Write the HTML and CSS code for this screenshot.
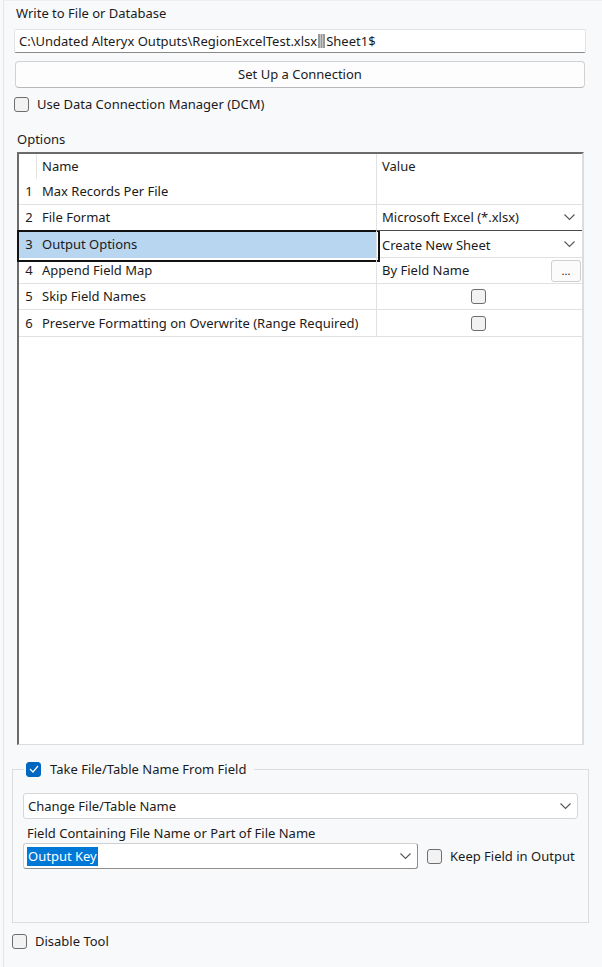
FILE: index.html
```html
<!DOCTYPE html>
<html lang="en">
<head>
    <meta charset="UTF-8">
    <title>Write to File or Database</title>
    <link rel="stylesheet" href="styles.css">
</head>
<body>
    <div class="panel">
        <div class="title">Write to File or Database</div>
        <div class="path">C:\Undated Alteryx Outputs\RegionExcelTest.xlsx<span class="sep"></span>Sheet1$</div>
        <div class="btn">Set Up a Connection</div>
        <label class="check dcm"><span class="box"></span>Use Data Connection Manager (DCM)</label>

        <div class="options-label">Options</div>
        <div class="grid">
            <div class="row head">
                <div class="num"></div>
                <div class="name">Name</div>
                <div class="value">Value</div>
            </div>
            <div class="row first">
                <div class="num">1</div>
                <div class="name">Max Records Per File</div>
                <div class="value"></div>
            </div>
            <div class="row">
                <div class="num">2</div>
                <div class="name">File Format</div>
                <div class="value combo">Microsoft Excel (*.xlsx)
                    <svg class="chev" width="11" height="7" viewBox="0 0 11 7"><polyline points="0.5,0.5 5.5,5.5 10.5,0.5" fill="none" stroke="#555" stroke-width="1.1"/></svg>
                </div>
            </div>
            <div class="row selected">
                <div class="num">3</div>
                <div class="name">Output Options</div>
                <div class="value combo">Create New Sheet
                    <svg class="chev" width="11" height="7" viewBox="0 0 11 7"><polyline points="0.5,0.5 5.5,5.5 10.5,0.5" fill="none" stroke="#555" stroke-width="1.1"/></svg>
                </div>
            </div>
            <div class="row">
                <div class="num">4</div>
                <div class="name">Append Field Map</div>
                <div class="value combo">By Field Name<span class="dots">...</span></div>
            </div>
            <div class="row">
                <div class="num">5</div>
                <div class="name">Skip Field Names</div>
                <div class="value center"><span class="box"></span></div>
            </div>
            <div class="row last">
                <div class="num">6</div>
                <div class="name">Preserve Formatting on Overwrite (Range Required)</div>
                <div class="value center"><span class="box"></span></div>
            </div>
        </div>

        <fieldset class="group">
            <legend><span class="box checked"><svg width="10" height="8" viewBox="0 0 10 8"><polyline points="1,4 4,7 9,1" fill="none" stroke="#fff" stroke-width="1.2"/></svg></span>Take File/Table Name From Field</legend>
            <div class="select wide">Change File/Table Name
                <svg class="chev" width="11" height="7" viewBox="0 0 11 7"><polyline points="0.5,0.5 5.5,5.5 10.5,0.5" fill="none" stroke="#555" stroke-width="1.1"/></svg>
            </div>
            <div class="field-label">Field Containing File Name or Part of File Name</div>
            <div class="field-row">
                <div class="select key"><span class="hl">Output Key</span>
                    <svg class="chev" width="11" height="7" viewBox="0 0 11 7"><polyline points="0.5,0.5 5.5,5.5 10.5,0.5" fill="none" stroke="#555" stroke-width="1.1"/></svg>
                </div>
                <label class="check"><span class="box"></span>Keep Field in Output</label>
            </div>
        </fieldset>

        <label class="check disable"><span class="box"></span>Disable Tool</label>
    </div>
</body>
</html>
```

FILE: styles.css
```css
* {
    margin: 0;
    padding: 0;
    box-sizing: border-box;
}
body {
    font-family: "Noto Sans", "Open Sans", sans-serif;
    font-size: 13px;
    color: #1b1b1b;
    background-color: #f8f9fb;
    width: 602px;
    height: 967px;
    overflow: hidden;
}
.panel {
    margin-left: 3px;
    height: 967px;
    border-left: 1px solid #e2e5e9;
    border-top: 1px solid #eceef1;
    padding-top: 3px;
}
.title {
    margin-left: 12px;
    height: 18px;
    line-height: 18px;
}
.path {
    margin: 7px 0 0 10px;
    width: 572px;
    height: 24px;
    line-height: 22px;
    padding-left: 4px;
    background-color: #fff;
    border: 1px solid #e3e3e3;
    border-bottom: 1px solid #8a8a8a;
    border-radius: 2px;
    white-space: nowrap;
}
.sep {
    display: inline-block;
    width: 7px;
    height: 14px;
    margin: 0 1px;
    vertical-align: -2px;
    background: linear-gradient(90deg, #9a9a9a 0 2px, #c4c4c4 2px 3px, #9a9a9a 3px 4px, #c4c4c4 4px 5px, #9a9a9a 5px 7px);
}
.btn {
    margin: 8px 0 0 11px;
    width: 570px;
    height: 27px;
    line-height: 25px;
    text-align: center;
    background-color: #fdfdfd;
    border: 1px solid #d2d2d2;
    border-bottom-color: #b8b8b8;
    border-radius: 4px;
}
.check {
    display: flex;
    align-items: center;
    gap: 8px;
}
.box {
    display: inline-flex;
    align-items: center;
    justify-content: center;
    width: 15px;
    height: 15px;
    border: 1px solid #6e6e6e;
    border-radius: 3px;
    background-color: #f2f2f2;
}
.box.checked {
    background-color: #0067c0;
    border-color: #0067c0;
}
.dcm {
    margin: 8px 0 0 10px;
    height: 16px;
}
.options-label {
    margin: 18px 0 0 13px;
    height: 18px;
    line-height: 18px;
}
.grid {
    margin: 4px 0 0 13px;
    width: 567px;
    height: 593px;
    background-color: #fff;
    border-top: 2px solid #6b6b6b;
    border-left: 2px solid #6b6b6b;
    border-right: 2px solid #dcdcdc;
    border-bottom: 1px solid #dcdcdc;
}
.row {
    display: grid;
    grid-template-columns: 18px 339px 1fr;
    height: 26px;
    line-height: 25px;
    border-bottom: 1px solid #e1e1e1;
}
.row.head {
    height: 25px;
    border-bottom: none;
}
.row.last {
    height: 27px;
    line-height: 26px;
}
.num {
    text-align: center;
    padding-left: 2px;
}
.head .num {
    border-right: 1px solid #e4e4e4;
}
.name {
    padding-left: 5px;
    white-space: nowrap;
}
.value {
    position: relative;
    padding-left: 5px;
    border-left: 1px solid #e1e1e1;
}
.combo {
    display: flex;
    align-items: center;
    justify-content: space-between;
    padding-right: 7px;
}
.center {
    display: flex;
    align-items: center;
    justify-content: center;
    padding-left: 0;
    padding-right: 3px;
}
.chev {
    flex: none;
}
.selected {
    position: relative;
    height: 27px;
    line-height: 26px;
}
.selected .num,
.selected .name {
    background-color: #b8d6f0;
}
.selected::before {
    content: "";
    position: absolute;
    left: -2px;
    top: -1px;
    width: 359px;
    height: 28px;
    border: 2px solid #111;
    pointer-events: none;
}
.selected .value {
    border-top: 1px solid #4a4a4a;
    margin-top: -1px;
    height: 28px;
}
.dots {
    width: 30px;
    height: 22px;
    line-height: 20px;
    margin-right: -6px;
    text-align: center;
    font-size: 11px;
    border: 1px solid #cfcfcf;
    border-radius: 3px;
    background-color: #fbfbfb;
}
.group {
    margin: 15px 0 0 8px;
    width: 576px;
    height: 163px;
    border: 1px solid #dcdde0;
    padding: 0 10px 0 10px;
}
.group legend {
    display: flex;
    align-items: center;
    gap: 9px;
    padding: 0 8px 0 2px;
    margin-left: 1px;
    height: 18px;
}
.select {
    display: flex;
    align-items: center;
    justify-content: space-between;
    height: 26px;
    padding: 0 6px 0 4px;
    background-color: #fff;
    border: 1px solid #d6d6d6;
    border-radius: 3px;
}
.select.wide {
    margin-top: 15px;
    width: 555px;
}
.field-label {
    margin: 4px 0 0 4px;
    height: 20px;
    line-height: 20px;
}
.field-row {
    display: flex;
    align-items: center;
    gap: 9px;
}
.select.key {
    width: 395px;
    border-color: #8e8e8e;
    border-top-color: #d0d0d0;
    border-left-color: #d0d0d0;
    padding-left: 3px;
}
.hl {
    background-color: #0078d7;
    color: #fff;
    padding: 0 1px;
    line-height: 19px;
}
.disable {
    margin: 10px 0 0 8px;
    height: 16px;
}
```
